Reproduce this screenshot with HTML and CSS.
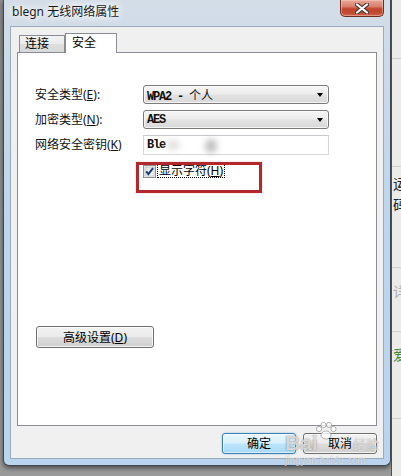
FILE: index.html
```html
<!DOCTYPE html>
<html lang="zh">
<head>
<meta charset="utf-8">
<title>blegn 无线网络属性</title>
<link rel="stylesheet" href="styles.css">
</head>
<body>
<div class="desktop">
  <div class="window">
    <div class="titlebar">
      <span class="title">blegn 无线网络属性</span>
      <span class="close">
        <svg width="14" height="11" viewBox="0 0 14 11">
          <path d="M2 1.5 L12 9.5 M12 1.5 L2 9.5" stroke="#4a3a36" stroke-width="4.2" stroke-linecap="round"/>
          <path d="M2 1.5 L12 9.5 M12 1.5 L2 9.5" stroke="#ffffff" stroke-width="2.2" stroke-linecap="round"/>
        </svg>
      </span>
    </div>
    <div class="client">
      <div class="tabs">
        <div class="tab">连接</div>
        <div class="tab active">安全</div>
      </div>
      <div class="panel">
        <div class="form">
          <span class="label">安全类型(<u>E</u>):</span>
          <div class="combo"><span class="mono">WPA2 - <span class="cjk">个人</span></span><i class="arrow"></i></div>
          <span class="label">加密类型(<u>N</u>):</span>
          <div class="combo"><span class="mono">AES</span><i class="arrow"></i></div>
          <span class="label">网络安全密钥(<u>K</u>)</span>
          <div class="field"><span class="mono">Ble</span><span class="smudge a"></span><span class="smudge b"></span></div>
        </div>
        <div class="check-row">
          <span class="checkbox">
            <svg width="13" height="13" viewBox="0 0 13 13">
              <defs>
                <linearGradient id="cb" x1="0" y1="0" x2="1" y2="1">
                  <stop offset="0" stop-color="#dcdfe4"/>
                  <stop offset="1" stop-color="#fbfbfb"/>
                </linearGradient>
              </defs>
              <rect x="0.5" y="0.5" width="12" height="12" fill="#f4f4f4" stroke="#8e8f8f"/>
              <rect x="2" y="2" width="9" height="9" fill="url(#cb)" stroke="#aeb3b9" stroke-width="0.6"/>
              <path d="M3.2 6.4 L5.4 9.2 L10 3.2" fill="none" stroke="#1f3c72" stroke-width="2"/>
            </svg>
          </span>
          <span class="check-label">显示字符(<u>H</u>)</span>
          <span class="highlight"></span>
        </div>
        <button class="btn adv">高级设置(<u>D</u>)</button>
      </div>
      <div class="actions">
        <button class="btn default">确定</button>
        <button class="btn">取消</button>
      </div>
    </div>
  </div>
  <div class="backdrop">
    <span class="bline l1"></span>
    <span class="bline l2"></span>
    <span class="btext t1">运</span>
    <span class="btext t2">码</span>
    <span class="bline l3"></span>
    <span class="btext t3 grey">详</span>
    <span class="bline l4"></span>
    <span class="btext t4 green">爱</span>
    <span class="bline l5"></span>
    <span class="bline l6"></span>
  </div>
  <div class="watermark">
    <span class="wm-bai">Bai</span>
    <svg class="wm-paw" width="22" height="18" viewBox="0 0 22 18">
      <g fill="rgba(255,255,255,0.8)" stroke="rgba(120,120,120,0.55)" stroke-width="1">
        <circle cx="4" cy="7" r="2.6"/>
        <circle cx="8.5" cy="3" r="2.6"/>
        <circle cx="14" cy="3" r="2.6"/>
        <circle cx="18.5" cy="7" r="2.6"/>
        <ellipse cx="11" cy="13" rx="5" ry="4"/>
      </g>
    </svg>
    <span class="wm-jy">经验</span>
    <span class="wm-url">jingyan.baidu.com</span>
  </div>
</div>
</body>
</html>
```

FILE: styles.css
```css
* { box-sizing: border-box; }

html, body {
  margin: 0;
  padding: 0;
}

body {
  width: 401px;
  height: 476px;
  overflow: hidden;
  font-family: "Noto Sans", "Noto Sans CJK SC", sans-serif;
  font-size: 12px;
  color: #000;
}

.desktop {
  position: relative;
  width: 401px;
  height: 476px;
  display: flex;
  align-items: flex-start;
  background: linear-gradient(180deg, #8d8d8d 0%, #9a9a9a 100%);
  overflow: hidden;
}

.window {
  margin-left: 3px;
  width: 388px;
  height: 466px;
  flex: none;
  border: 1px solid #3e4650;
  border-top: none;
  border-radius: 0 0 6px 6px;
  padding: 0 6px 6px 6px;
  background: linear-gradient(180deg, #d3dde7 0%, #c9d9ea 20%, #bdd5ee 50%, #bad4ef 100%);
  box-shadow: 0 2px 5px rgba(0, 0, 0, 0.55);
  display: flex;
  flex-direction: column;
}

.titlebar {
  height: 26px;
  flex: none;
  display: flex;
  justify-content: space-between;
  align-items: flex-start;
  padding-left: 2px;
}

.title {
  margin-top: 4px;
  line-height: 16px;
  font-size: 12px;
  font-family: "Noto Sans", "Noto Sans CJK SC", sans-serif;
  color: #1a1a1a;
  text-shadow: 0 0 6px #fff, 0 0 10px #fff, 0 0 14px rgba(255, 255, 255, 0.9);
}

.close {
  width: 44px;
  height: 17px;
  border: 1px solid #6b2c22;
  border-top: none;
  border-radius: 0 0 5px 5px;
  background: linear-gradient(180deg, #e9a999 0%, #d9806c 40%, #c2452d 55%, #c14a31 80%, #d0674f 100%);
  box-shadow: inset 0 0 0 1px rgba(255, 210, 200, 0.45);
  display: flex;
  align-items: center;
  justify-content: center;
}

.client {
  height: 433px;
  flex: none;
  background: #f0f0f0;
  border: 1px solid #9aaabb;
  padding: 6px 6px 4px 6px;
  display: flex;
  flex-direction: column;
}

.tabs {
  height: 20px;
  display: flex;
  align-items: flex-end;
  padding-left: 2px;
  position: relative;
  z-index: 1;
}

.tab {
  height: 17px;
  width: 46px;
  margin-bottom: 1px;
  border: 1px solid #898c95;
  border-bottom: none;
  background: linear-gradient(180deg, #f3f3f3 0%, #ebebeb 50%, #dedede 51%, #d9d9d9 100%);
  padding-left: 5px;
  line-height: 16px;
  font-size: 12px;
}

.tab.active {
  height: 20px;
  width: 52px;
  margin-bottom: 0;
  background: #ffffff;
  padding-left: 6px;
  padding-top: 1px;
}

.panel {
  margin-top: -1px;
  width: 360px;
  height: 374px;
  background: #ffffff;
  border: 1px solid #898c95;
  padding: 32px 0 0 17px;
  display: flex;
  flex-direction: column;
  align-items: flex-start;
}

.form {
  display: grid;
  grid-template-columns: 108px 186px;
  grid-template-rows: 19px 19px 20px;
  row-gap: 6px;
}

.label {
  align-self: center;
  font-size: 12px;
  line-height: 14px;
  color: #111;
}

.mono {
  font-family: "Liberation Mono", "DejaVu Sans Mono", monospace;
  font-size: 12px;
  letter-spacing: -1.2px;
  font-weight: bold;
  color: #111;
}

.cjk {
  font-family: "Noto Sans CJK SC", sans-serif;
  font-size: 12px;
  font-weight: normal;
  letter-spacing: 0;
}

.combo {
  border: 1px solid #7a7a7a;
  border-radius: 3px;
  background: linear-gradient(180deg, #f6f6f6 0%, #ececec 45%, #e2e2e2 55%, #d8d8d8 100%);
  box-shadow: inset 0 0 0 1px rgba(255, 255, 255, 0.7);
  display: flex;
  align-items: center;
  justify-content: space-between;
  padding: 0 5px 0 3px;
}

.arrow {
  width: 0;
  height: 0;
  border-left: 3.5px solid transparent;
  border-right: 3.5px solid transparent;
  border-top: 4px solid #000;
}

.field {
  position: relative;
  border: 1px solid #d4d7db;
  border-top-color: #c5c8cc;
  background: #ffffff;
  display: flex;
  align-items: center;
  padding: 0 3px;
}

.smudge {
  position: absolute;
  border-radius: 50%;
  filter: blur(3px);
}

.smudge.a {
  left: 22px;
  top: 4px;
  width: 14px;
  height: 10px;
  background: rgba(210, 210, 210, 0.7);
}

.smudge.b {
  left: 61px;
  top: 3px;
  width: 12px;
  height: 14px;
  background: rgba(170, 170, 170, 0.75);
}

.check-row {
  position: relative;
  margin-top: 9px;
  padding-left: 108px;
  height: 14px;
  display: flex;
  align-items: center;
}

.checkbox {
  width: 13px;
  height: 13px;
  display: block;
  margin-right: 1px;
}

.checkbox svg {
  display: block;
}

.check-label {
  border: 1px dotted #000;
  padding: 0 1px;
  line-height: 12px;
  font-size: 12px;
  height: 14px;
}

.highlight {
  position: absolute;
  left: 101px;
  top: -2px;
  width: 126px;
  height: 31px;
  border: 3px solid #b3282c;
  box-shadow: 0 0 1px rgba(179, 40, 44, 0.5);
}

.btn {
  font-family: "Noto Sans", "Noto Sans CJK SC", sans-serif;
  font-size: 12px;
  color: #000;
  height: 21px;
  padding: 0;
  border: 1px solid #707070;
  border-radius: 3px;
  background: linear-gradient(180deg, #f2f2f2 0%, #ebebeb 48%, #dddddd 52%, #cfcfcf 100%);
  box-shadow: inset 0 0 0 1px rgba(255, 255, 255, 0.75);
  line-height: 17px;
}

.btn.adv {
  margin-top: 148px;
  margin-left: 1px;
  width: 118px;
  height: 22px;
}

.actions {
  margin-top: 7px;
  display: flex;
  justify-content: flex-end;
  gap: 7px;
}

.actions .btn {
  width: 74px;
}

.btn.default {
  border-color: #3c7fb1;
  background: linear-gradient(180deg, #eaf6fd 0%, #d9f0fc 48%, #bee6fd 52%, #a7d9f5 100%);
  box-shadow: inset 0 0 0 1px rgba(255, 255, 255, 0.55), 0 0 2px rgba(60, 160, 220, 0.6);
}

.backdrop {
  position: relative;
  flex: 1;
  height: 476px;
  background: #ebebea;
  border-left: 1px solid #4a4f55;
  overflow: hidden;
}

.bline {
  position: absolute;
  left: 0;
  right: 0;
  height: 1px;
  background: #cfcfcf;
}

.l1 { top: 58px; }
.l2 { top: 166px; }
.l3 { top: 267px; }
.l4 { top: 331px; }
.l5 { top: 350px; }
.l6 { top: 418px; }

.btext {
  position: absolute;
  left: 1px;
  font-size: 14px;
  line-height: 16px;
  font-family: "Noto Sans CJK SC", sans-serif;
  color: #222;
}

.t1 { top: 175px; }
.t2 { top: 196px; }
.t3 { top: 283px; }
.t4 { top: 346px; }

.btext.grey { color: #b0b0b0; }
.btext.green { color: #3f8a3a; }

.watermark {
  position: absolute;
  left: 285px;
  top: 420px;
  width: 100px;
  height: 48px;
  pointer-events: none;
}

.wm-bai {
  position: absolute;
  left: 0;
  top: 12px;
  font-family: "Liberation Sans", sans-serif;
  font-weight: bold;
  font-size: 21px;
  line-height: 22px;
  color: rgba(255, 255, 255, 0.7);
  text-shadow: 0 0 1px rgba(90, 90, 90, 0.7), 0 0 2px rgba(120, 120, 120, 0.4);
}

.wm-paw {
  position: absolute;
  left: 30px;
  top: 2px;
}

.wm-jy {
  position: absolute;
  left: 68px;
  top: 16px;
  font-family: "Noto Sans CJK SC", sans-serif;
  font-size: 13px;
  line-height: 16px;
  color: rgba(255, 255, 255, 0.7);
  text-shadow: 0 0 1px rgba(90, 90, 90, 0.7);
}

.wm-url {
  position: absolute;
  left: 0;
  top: 36px;
  font-family: "Liberation Sans", sans-serif;
  font-size: 10px;
  line-height: 10px;
  color: rgba(255, 255, 255, 0.6);
  text-shadow: 0 0 1px rgba(110, 110, 110, 0.55);
}
```
